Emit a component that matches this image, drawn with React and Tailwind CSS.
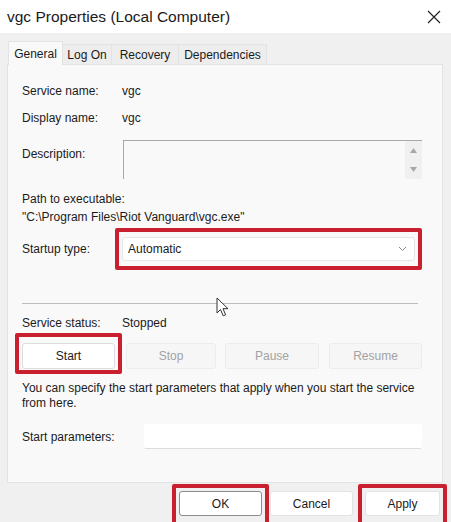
import React from 'react'

const font = { fontFamily: '"Liberation Sans", Arial, sans-serif' }

function RedBox({ className = '', children }) {
  return <div className={`border-[4px] border-[#c9202f] rounded-[2px] ${className}`}>{children}</div>
}

function Field({ label, children, className = '' }) {
  return (
    <div className={`flex items-center h-[20px] ${className}`}>
      <span className="w-[100px] shrink-0">{label}</span>
      {children}
    </div>
  )
}

function DisabledButton({ label, className = '' }) {
  return (
    <div className={`h-[26px] flex items-center justify-center bg-[#f6f6f6] border border-[#ececec] rounded-[3px] text-[#a2a2a2] ${className}`}>
      {label}
    </div>
  )
}

function Cursor() {
  return (
    <svg className="absolute left-[216px] top-[297px]" width="14" height="21" viewBox="0 0 14 21">
      <path d="M1 1 L1 16 L4.5 12.5 L7.2 18.8 L9.6 17.8 L7 11.7 L12 11.7 Z" fill="#fff" stroke="#333" strokeWidth="1" strokeLinejoin="round" />
    </svg>
  )
}

export default function App() {
  const tabs = [
    { label: 'Log On', w: 'w-[49px]' },
    { label: 'Recovery', w: 'w-[67px]' },
    { label: 'Dependencies', w: 'w-[88px]' },
  ]

  return (
    <div className="relative w-[451px] h-[522px] overflow-hidden bg-[#f0f0f0] text-[12px] text-[#1b1b1b]" style={font}>
      {/* title bar */}
      <div className="h-[33px] bg-white flex items-center justify-between pl-[7px] pr-[10px]">
        <span className="text-[15.5px] text-[#1a1a1a]">vgc Properties (Local Computer)</span>
        <svg width="14" height="14" viewBox="0 0 14 14">
          <path d="M1 1 L13 13 M13 1 L1 13" stroke="#222" strokeWidth="1.2" />
        </svg>
      </div>

      {/* tabs */}
      <div className="flex items-end pl-[8px] pt-[7px] h-[31px]">
        <div className="relative z-10 w-[55px] h-[24px] -mb-px bg-[#f9f9f9] border border-b-0 border-[#e3e3e3] flex items-center justify-center">
          General
        </div>
        {tabs.map((t) => (
          <div key={t.label} className={`${t.w} h-[20px] bg-[#ededed] border border-b-0 border-l-0 border-[#e3e3e3] flex items-center justify-center`}>
            {t.label}
          </div>
        ))}
      </div>

      {/* panel */}
      <div className="mx-[7px] w-[436px] h-[419px] bg-[#f9f9f9] border border-[#e3e3e3] pl-[14px] pr-[20px]">
        <Field label="Service name:" className="mt-[16px]">vgc</Field>
        <Field label="Display name:" className="mt-[7px]">vgc</Field>

        <div className="flex mt-[12px]">
          <span className="w-[101px] shrink-0 pt-[5px]">Description:</span>
          <div className="flex w-[299px] h-[39px] border-t border-l border-[#a8a8a8]">
            <div className="flex-1" />
            <div className="w-[17px] bg-[#f0f0f0] flex flex-col items-center justify-between py-[7px]">
              <svg width="7" height="5" viewBox="0 0 7 5"><path d="M3.5 0 L7 5 L0 5 Z" fill="#a8a8a8" /></svg>
              <svg width="7" height="5" viewBox="0 0 7 5"><path d="M0 0 L7 0 L3.5 5 Z" fill="#a8a8a8" /></svg>
            </div>
          </div>
        </div>

        <div className="mt-[11px] leading-[18px]">
          <div>Path to executable:</div>
          <div>"C:\Program Files\Riot Vanguard\vgc.exe"</div>
        </div>

        <div className="flex items-center mt-[2px]">
          <span className="w-[93px] shrink-0">Startup type:</span>
          <RedBox className="w-[315px] px-[3px] py-[5px]">
            <div className="h-[24px] bg-white border border-[#e6e6e6] rounded-[3px] flex items-center justify-between pl-[5px] pr-[7px]">
              <span>Automatic</span>
              <svg width="9" height="6" viewBox="0 0 9 6"><path d="M1 1 L4.5 4.5 L8 1" fill="none" stroke="#8a8a8a" strokeWidth="1" /></svg>
            </div>
          </RedBox>
        </div>

        <div className="mt-[33px] w-[396px] h-px bg-[#bdbdbd]" />

        <Field label="Service status:" className="mt-[9px]">Stopped</Field>

        <div className="flex items-start">
          <RedBox className="-ml-[7px] w-[107px] pl-[3px] pr-[3px] pt-[6px] pb-[1px]">
            <div className="h-[26px] bg-white border border-[#dcdcdc] rounded-[3px] flex items-center justify-center">Start</div>
          </RedBox>
          <DisabledButton label="Stop" className="mt-[10px] ml-[4px] w-[90px]" />
          <DisabledButton label="Pause" className="mt-[10px] ml-[9px] w-[94px]" />
          <DisabledButton label="Resume" className="mt-[10px] ml-[10px] w-[93px]" />
        </div>

        <p className="mt-[7px] leading-[15px] w-[400px]">
          You can specify the start parameters that apply when you start the service from here.
        </p>

        <div className="flex items-center mt-[13px]">
          <span className="w-[122px] shrink-0">Start parameters:</span>
          <div className="w-[278px] h-[25px] bg-white border-b border-[#dcdcdc] rounded-[2px]" />
        </div>
      </div>

      {/* bottom buttons */}
      <div className="flex items-start pl-[172px] mt-px">
        <RedBox className="w-[97px] h-[44px] px-[3px] pt-[3px]">
          <div className="h-[25px] bg-white border border-[#8c8c8c] rounded-[3px] flex items-center justify-center">OK</div>
        </RedBox>
        <div className="ml-[1px] mt-[7px] w-[83px] h-[25px] bg-white border border-[#e3e3e3] rounded-[3px] flex items-center justify-center">Cancel</div>
        <RedBox className="ml-[5px] w-[89px] h-[44px] px-[3px] pt-[3px]">
          <div className="h-[25px] bg-white border border-[#e3e3e3] rounded-[3px] flex items-center justify-center">Apply</div>
        </RedBox>
      </div>

      <Cursor />
    </div>
  )
}
